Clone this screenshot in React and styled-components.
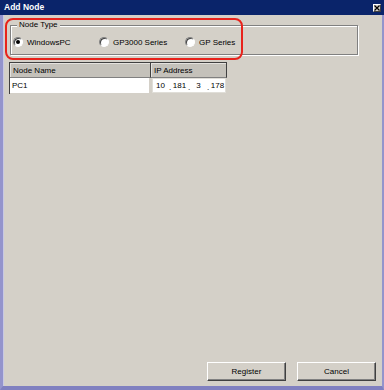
import React, { useState } from "react";
import styled, { createGlobalStyle } from "styled-components";

const GlobalStyle = createGlobalStyle`
  html, body {
    margin: 0;
    padding: 0;
    background: #d4d0c8;
  }
  * {
    box-sizing: border-box;
  }
`;

const Window = styled.div`
  width: 384px;
  height: 390px;
  display: flex;
  flex-direction: column;
  font-family: "Liberation Sans", Arial, sans-serif;
  font-size: 8px;
  color: #000;
  background: #d4d0c8;
`;

const TitleBar = styled.div`
  height: 15px;
  flex: none;
  display: flex;
  align-items: center;
  justify-content: space-between;
  padding: 0 3px 0 4px;
  background: #0a246a;
`;

const Title = styled.span`
  color: #fff;
  font-weight: bold;
  font-size: 8.5px;
  line-height: 15px;
`;

const CloseBox = styled.div`
  width: 8px;
  height: 8px;
  display: flex;
  align-items: center;
  justify-content: center;
  background: #d4d0c8;
  border: 1px solid;
  border-color: #fff #404040 #404040 #fff;
`;

const Body = styled.div`
  position: relative;
  flex: 1;
  display: flex;
  flex-direction: column;
  padding: 5px 6px 5px 6px;
  border-left: 3px solid #9494cc;
  border-right: 2px solid #9494cc;
  border-bottom: 4px solid #8080c0;
  box-shadow: inset 1px 0 0 #c8c8e4;
`;

const GroupBox = styled.fieldset`
  width: 348px;
  margin: 0 0 0 1px;
  padding: 6px 2px 6px 2px;
  border: 1px solid #808080;
  box-shadow: inset 1px 1px 0 #fff, 1px 1px 0 #fff;
  display: flex;
`;

const Legend = styled.legend`
  padding: 0 2px;
  margin-left: 4px;
  line-height: 10px;
  background: #d4d0c8;
`;

const RadioOption = styled.label`
  width: 86px;
  display: flex;
  align-items: center;
  gap: 4px;
  height: 12px;
`;

const RadioCircle = styled.span`
  width: 10px;
  height: 10px;
  border-radius: 50%;
  background: #fff;
  border: 1px solid;
  border-color: #808080 #fff #fff #808080;
  box-shadow: inset 1px 1px 0 #404040;
  display: flex;
  align-items: center;
  justify-content: center;
  flex: none;

  &::after {
    content: "";
    width: 4px;
    height: 4px;
    border-radius: 50%;
    background: ${(p) => (p.$checked ? "#000" : "transparent")};
  }
`;

const Table = styled.div`
  margin-top: 7px;
  width: 217px;
  display: grid;
  grid-template-columns: 141px 76px;
  grid-auto-rows: 16px;
  border-left: 1px solid #404040;
`;

const HeaderCell = styled.div`
  display: flex;
  align-items: center;
  padding-left: 3px;
  background: #c4c1ba;
  border-top: 1px solid #404040;
  border-right: 1px solid #404040;
  border-bottom: 1px solid #808080;
  box-shadow: inset 1px 1px 0 #e4e2de;
`;

const DataCell = styled.div`
  display: flex;
  align-items: center;
  padding-left: ${(p) => (p.$ip ? "0" : "2px")};
  background: #fff;
  margin: ${(p) => (p.$ip ? "0 1px 1px 1px" : "0 2px 1px 0")};
  border: ${(p) => (p.$ip ? "1px solid #e0ded8" : "none")};
`;

const Octet = styled.span`
  width: 15px;
  text-align: center;
`;

const Dot = styled.span`
  width: 4px;
  text-align: center;
  position: relative;
  top: 2px;
`;

const Spacer = styled.div`
  flex: 1;
`;

const ButtonRow = styled.div`
  display: flex;
  justify-content: flex-end;
  gap: 11px;
`;

const Button = styled.button`
  width: 79px;
  height: 19px;
  padding: 0;
  font-family: inherit;
  font-size: 8px;
  color: #000;
  background: #d4d0c8;
  border: 1px solid;
  border-color: #fff #404040 #404040 #fff;
  box-shadow: inset -1px -1px 0 #808080;
  cursor: default;
`;

const Highlight = styled.div`
  position: absolute;
  left: 2px;
  top: 3px;
  width: 238px;
  height: 42px;
  border: 2px solid #e8231c;
  border-radius: 8px;
  pointer-events: none;
`;

const nodeTypes = ["WindowsPC", "GP3000 Series", "GP Series"];

const App = () => {
  const [nodeType, setNodeType] = useState("WindowsPC");
  const ip = ["10", "181", "3", "178"];

  return (
    <>
      <GlobalStyle />
      <Window>
        <TitleBar>
          <Title>Add Node</Title>
          <CloseBox>
            <svg width="6" height="6" viewBox="0 0 6 6">
              <path d="M0.5 0.5L5.5 5.5M5.5 0.5L0.5 5.5" stroke="#000" strokeWidth="1.2" />
            </svg>
          </CloseBox>
        </TitleBar>
        <Body>
          <GroupBox>
            <Legend>Node Type</Legend>
            {nodeTypes.map((t) => (
              <RadioOption key={t} onClick={() => setNodeType(t)}>
                <RadioCircle $checked={nodeType === t} />
                {t}
              </RadioOption>
            ))}
          </GroupBox>
          <Table>
            <HeaderCell>Node Name</HeaderCell>
            <HeaderCell>IP Address</HeaderCell>
            <DataCell>PC1</DataCell>
            <DataCell $ip>
              {ip.map((o, i) => (
                <React.Fragment key={i}>
                  <Octet>{o}</Octet>
                  {i < 3 && <Dot>.</Dot>}
                </React.Fragment>
              ))}
            </DataCell>
          </Table>
          <Spacer />
          <ButtonRow>
            <Button>Register</Button>
            <Button>Cancel</Button>
          </ButtonRow>
          <Highlight />
        </Body>
      </Window>
    </>
  );
};

export default App;
